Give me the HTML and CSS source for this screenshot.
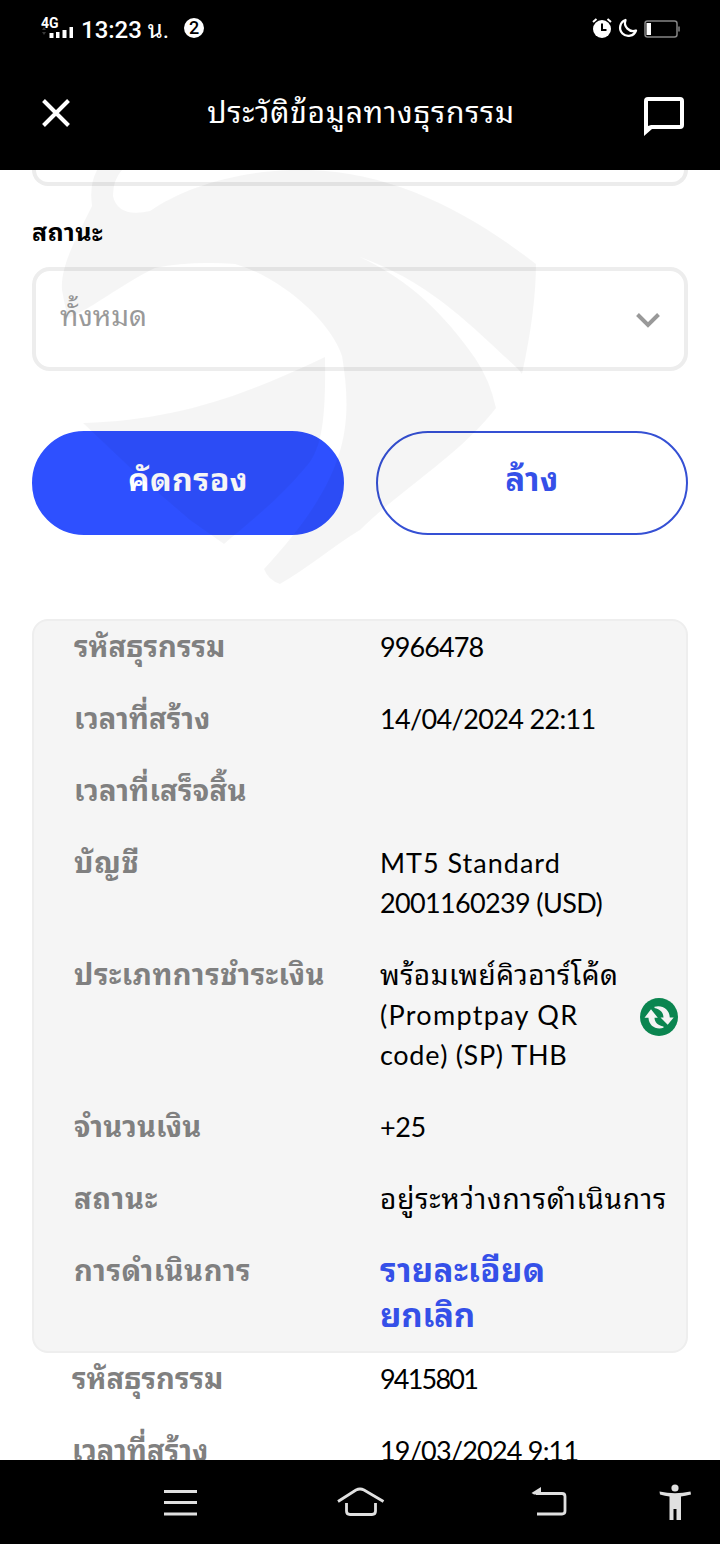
FILE: index.html
```html
<!DOCTYPE html>
<html lang="th">
<head>
  <meta charset="UTF-8" />
  <meta name="viewport" content="width=device-width, initial-scale=1" />
  <title>ประวัติข้อมูลทางธุรกรรม</title>
  <link rel="stylesheet" href="styles.css">
</head>
<body>
  <header class="header">
    <div class="status-bar">
      <div class="status-left">
        <div class="network">
          <span class="network-type">4G</span>
          <svg class="signal" viewBox="0 0 32 14">
            <path d="M1 6l2-3 2 3zM1 8h4l-2 3z" fill="#3a3a3a"/>
            <path d="M8.500 9h4v5h-4zM15 8h3.500v6H15zM21.500 6h4v8h-4zM28.500 3h3.500v11h-3.500z" fill="#fff"/>
          </svg>
        </div>
        <span class="clock">13:23 <span class="clock-unit">น.</span></span>
        <span class="notice">2</span>
      </div>
      <div class="status-right">
        <svg class="alarm" viewBox="0 0 20 20">
          <circle cx="10" cy="11" r="9" fill="#fff"/>
          <path d="M1 4l3.500-3M19 4l-3.500-3" stroke="#fff" stroke-width="2" fill="none"/>
          <path d="M10 5.500V12h4.500" stroke="#000" stroke-width="2" fill="none"/>
        </svg>
        <svg class="moon" viewBox="0 0 20 20">
          <path d="M7.500 2A8.200 8.200 0 1 0 18 12.500 8.200 8.200 0 0 1 7.500 2z" fill="none" stroke="#fff" stroke-width="2.300" stroke-linejoin="round"/>
        </svg>
        <svg class="battery" viewBox="0 0 36 18">
          <rect x="1" y="1" width="32" height="16" rx="2.500" fill="none" stroke="#858585" stroke-width="1.500"/>
          <rect x="2.500" y="3" width="4.500" height="12" fill="#fff"/>
          <path d="M35 6.500v5" stroke="#858585" stroke-width="1.500"/>
        </svg>
      </div>
    </div>
    <div class="title-bar">
      <svg class="close" viewBox="0 0 28 28">
        <path d="M1.500 1.500l25 25M26.500 1.500l-25 25" stroke="#fff" stroke-width="4" fill="none"/>
      </svg>
      <h1 class="title">ประวัติข้อมูลทางธุรกรรม</h1>
      <svg class="chat" viewBox="0 0 40 40">
        <path d="M4 1h32q4 0 4 4v24q0 4-4 4H8l-8 7V5q0-4 4-4zM4 5v25l3-1h29V5z" fill="#fff" fill-rule="evenodd"/>
      </svg>
    </div>
  </header>

  <main class="content">
    <div class="field-end"></div>
    <label class="field-label">สถานะ</label>
    <div class="select">
      <span class="select-value">ทั้งหมด</span>
      <svg class="chevron" viewBox="0 0 24 15">
        <path d="M1.500 1.500L12 12 22.500 1.500" fill="none" stroke="#999" stroke-width="4"/>
      </svg>
    </div>
    <div class="buttons">
      <button class="btn btn-filter">คัดกรอง</button>
      <button class="btn btn-clear">ล้าง</button>
    </div>

    <section class="card">
      <div class="row"><div class="key key-id">รหัสธุรกรรม</div><div class="value num-id">9966478</div></div>
      <div class="row"><div class="key key-created">เวลาที่สร้าง</div><div class="value num-date">14/04/2024 22:11</div></div>
      <div class="row"><div class="key key-done">เวลาที่เสร็จสิ้น</div><div class="value"></div></div>
      <div class="row"><div class="key key-account">บัญชี</div><div class="value"><span class="account">MT5 Standard</span><br><span class="num-account">2001160239 (USD)</span></div></div>
      <div class="row">
        <div class="key key-payment">ประเภทการชำระเงิน</div>
        <div class="value payment">
          <div><span class="thai pay-name">พร้อมเพย์คิวอาร์โค้ด</span><br><span class="pay-qr">(Promptpay QR</span><br><span class="pay-code">code) (SP) THB</span></div>
          <svg class="pay-icon" viewBox="0 0 38 38">
            <circle cx="19" cy="19" r="19" fill="#0b8550"/>
            <path d="M14.500 8.700C22 6.500 29.500 11 29.800 19.500H33.700L27.700 26.700 20.500 19.500H23.500C23.500 14.500 20 11 14.500 10z" fill="#f4f4f4"/>
            <path d="M23.500 29.800C16 32 8.800 28 8.500 19.700H4.500L11 11.300 17.800 19.700H14.500C14.500 24 18 27.500 23.500 28.500z" fill="#f4f4f4"/>
          </svg>
        </div>
      </div>
      <div class="row"><div class="key key-amount">จำนวนเงิน</div><div class="value amount">+25</div></div>
      <div class="row"><div class="key key-status">สถานะ</div><div class="value"><span class="thai status">อยู่ระหว่างการดำเนินการ</span></div></div>
      <div class="row">
        <div class="key key-action">การดำเนินการ</div>
        <div class="value actions"><a class="details">รายละเอียด</a><a class="cancel">ยกเลิก</a></div>
      </div>
    </section>

    <section class="card card-plain">
      <div class="row"><div class="key key-id">รหัสธุรกรรม</div><div class="value num-id2">9415801</div></div>
      <div class="row"><div class="key key-created">เวลาที่สร้าง</div><div class="value num-date2">19/03/2024 9:11</div></div>
    </section>

    <!-- loading logo, lies over the form -->
    <svg class="watermark" viewBox="0 170 720 430">
      <path d="M97 170Q89 185 92 206C78 235 60 265 62 290Q64 303 68 318C95 307 120 285 155 268Q190 261 235 264C280 277 330 320 342 356C354 430 346 480 264 569Q268 580 280 584C305 570 335 545 360 530C400 490 460 455 496 408Q490 380 475 358C445 315 410 280 360 257C430 283 465 320 518 369L522 374Q536 310 536 264C460 205 380 167 290 170C230 172 180 190 150 211Q118 218 113 196Q113 180 122 170z"/>
      <path d="M83 423C170 420 235 400 325 357C326 420 322 450 305 468C280 498 250 522 224 544L190 520 140 477z"/>
    </svg>
  </main>

  <nav class="nav">
    <svg viewBox="0 0 720 84">
      <g fill="none" stroke="#e0e0e0" stroke-width="3">
        <path d="M164 31.500h33M164 42.500h33M164 54h33"/>
        <path d="M338 41.500l18-11.500q4-2 8 0l19.500 11.500M346.500 43v8q0 3.500 3.500 3.500h22q3.500 0 3.500-3.500v-8" stroke-width="2.800"/>
        <path d="M536 33.500h26q3 0 3 3v14.500q0 3-3 3h-25" stroke-width="2.800"/>
      </g>
      <g fill="#e0e0e0">
        <path d="M531.500 33l9.500-6v7.500h-7z"/>
        <circle cx="675" cy="28" r="3.600"/>
        <path d="M659.500 31.500Q675 35 690.500 31.500L691 34.500Q685 36 681 36.500V60H676.500V49H673.500V60H669.500V36.500Q665 36 660 34.500z"/>
      </g>
    </svg>
  </nav>
</body>
</html>
```
FILE: styles.css
```css
* {
  box-sizing: border-box;
}
body {
  margin: 0;
  width: 720px;
  height: 1544px;
  overflow: hidden;
  display: flex;
  flex-direction: column;
  background: #fff;
  color: #000;
  font-family: Lato, "Noto Sans Thai Looped", "Noto Looped Thai", Loma, Garuda, Waree, "Noto Sans Thai", sans-serif;
}
svg {
  display: block;
  flex-shrink: 0;
}
.header {
  height: 170px;
  flex-shrink: 0;
  background: #000;
  color: #fff;
}
.status-bar {
  height: 56px;
  padding: 0 40px 0 41px;
  display: flex;
  justify-content: space-between;
  align-items: center;
}
.status-left,
.status-right {
  display: flex;
  align-items: center;
}
.network {
  width: 33px;
  height: 22px;
  margin-right: 7px;
}
.network-type {
  display: block;
  height: 10px;
  font: bold 14px/12px Roboto, sans-serif;
}
.signal {
  width: 32px;
  height: 14px;
  margin-top: -3px;
}
.clock {
  width: 88px;
  padding-bottom: 3px;
  font-family: Roboto, "Noto Sans Thai Looped", Loma, "Noto Sans Thai", sans-serif;
  font-size: 24px;
  font-weight: 500;
  white-space: nowrap;
}
.clock-unit {
  font-weight: 400;
}
.notice {
  width: 20px;
  height: 20px;
  margin-left: 15px;
  border-radius: 50%;
  background: #fff;
  color: #000;
  font: 500 18px/20px Roboto, sans-serif;
  text-align: center;
}
.alarm {
  width: 20px;
  height: 20px;
  margin-right: 6px;
}
.moon {
  width: 20px;
  height: 20px;
  margin-right: 6px;
}
.battery {
  width: 36px;
  height: 18px;
  margin-top: 1px;
}
.title-bar {
  height: 114px;
  padding: 0 36px 0 42px;
  display: flex;
  justify-content: space-between;
  align-items: center;
}
.close {
  width: 28px;
  height: 28px;
}
.title {
  margin: 0 0 7px 8px;
  font-size: 30px;
  font-weight: 400;
  letter-spacing: 0.75px;
  white-space: nowrap;
}
.chat {
  width: 40px;
  height: 40px;
  margin-top: 6px;
}
.content {
  position: relative;
  height: 1290px;
  flex-shrink: 0;
  overflow: hidden;
  padding: 0 32px;
}
.field-end {
  height: 16px;
  border: 4px solid #ececec;
  border-top: 0;
  border-radius: 0 0 16px 16px;
}
.field-label {
  display: block;
  height: 81px;
  line-height: 90px;
  font-size: 25px;
  font-weight: 700;
  letter-spacing: 0.5px;
}
.select {
  height: 104px;
  padding: 0 24px;
  display: flex;
  justify-content: space-between;
  align-items: center;
  border: 4px solid #ededed;
  border-radius: 18px;
  color: #999;
  font-size: 28px;
}
.select-value {
  padding-bottom: 11px;
}
.chevron {
  width: 24px;
  height: 15px;
  margin-top: 3px;
}
.buttons {
  display: flex;
  gap: 32px;
  margin: 60px 0 84px;
}
.btn {
  flex: 1;
  height: 104px;
  padding: 0 0 13px;
  border: 2px solid #2e50ff;
  border-radius: 52px;
  font-family: inherit;
  font-size: 32px;
  font-weight: 700;
}
.btn-filter {
  background: #2e50ff;
  color: #fff;
  letter-spacing: 0.4px;
}
.btn-clear {
  background: transparent;
  border-color: #3550d4;
  color: #3550e8;
  font-size: 33px;
  letter-spacing: 0.4px;
}
.card {
  height: 734px;
  padding: 6px 8px 0 40px;
  display: flex;
  flex-direction: column;
  gap: 32px;
  border: 2px solid #eee;
  border-radius: 16px;
  background: #f5f5f5;
}
.card-plain {
  height: auto;
  border: 0;
  background: none;
}
.row {
  display: flex;
  font-size: 27px;
  line-height: 40px;
  white-space: nowrap;
}
.key {
  width: 306px;
  height: 38px;
  flex-shrink: 0;
  color: #808080;
  font-size: 29px;
  font-weight: 700;
  line-height: 37px;
}
.card-plain .key {
  width: 308px;
}
.key-id {
  letter-spacing: 0.1px;
}
.key-created,
.key-amount {
  letter-spacing: 0.15px;
}
.key-done {
  letter-spacing: 0.25px;
}
.key-account {
  letter-spacing: 0.8px;
}
.key-payment {
  letter-spacing: 0.6px;
}
.key-status {
  letter-spacing: 0.9px;
}
.key-action {
  letter-spacing: 0.65px;
}
.value {
  flex: 1;
  min-height: 40px;
}
.num-id {
  letter-spacing: -0.9px;
}
.num-id2 {
  letter-spacing: -1.8px;
}
.num-date {
  letter-spacing: -0.65px;
}
.num-date2 {
  letter-spacing: -0.8px;
}
.account {
  letter-spacing: 1px;
}
.num-account {
  letter-spacing: -0.65px;
}
.amount {
  letter-spacing: -0.4px;
}
.thai {
  font-size: 28px;
  line-height: 36px;
}
.pay-name {
  letter-spacing: 0.5px;
}
.pay-qr {
  letter-spacing: 1.3px;
}
.pay-code {
  letter-spacing: 0.7px;
}
.status {
  letter-spacing: 0.8px;
}
.payment {
  display: flex;
  justify-content: space-between;
  align-items: center;
}
.pay-icon {
  width: 38px;
  height: 38px;
  margin-top: 3px;
}
.actions {
  height: 90px;
  display: flex;
  flex-direction: column;
  color: #3550e8;
  font-size: 33px;
  font-weight: 700;
}
.actions a {
  height: 45px;
  line-height: 36px;
}
.details {
  letter-spacing: 0.4px;
}
.cancel {
  letter-spacing: -0.2px;
}
.watermark {
  position: absolute;
  left: 0;
  top: 0;
  width: 720px;
  height: 430px;
  fill: rgba(0, 0, 0, 0.04);
  pointer-events: none;
}
.nav {
  height: 84px;
  flex-shrink: 0;
  background: #000;
}
.nav svg {
  width: 720px;
  height: 84px;
}
```
